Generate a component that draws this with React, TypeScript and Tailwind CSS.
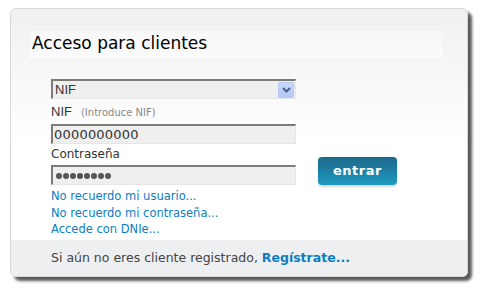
export default function App() {
  const font = { fontFamily: 'Tahoma, "DejaVu Sans", Verdana, sans-serif' };
  return (
    <div className="w-[481px] h-[289px] bg-white pt-[8px] pl-[10px]" style={font}>
      <div className="relative w-[458px] h-[269px] rounded-[6px] border border-[#d8d8d8] bg-gradient-to-b from-[#f0f0f0] via-white to-white shadow-[4px_4px_3px_rgba(0,0,0,0.65)] flex flex-col overflow-hidden">
        <div className="pt-[22px] pl-[19px] pr-[24px]">
          <div className="h-[27px] bg-gradient-to-b from-[#f6f6f6] to-[#fbfbfb] pl-[2px] pt-[1px]">
            <span className="text-[17px] leading-[20px] text-black bg-[#f9f9f9] pr-[2px]">Acceso para clientes</span>
          </div>
        </div>

        <div className="pl-[40px] pt-[21px] flex gap-[22px]">
          <div className="w-[245px] flex flex-col">
            <div className="h-[20px] flex items-center bg-[#efefef] border-t-2 border-l-2 border-[#7b7b74] border-r border-b border-r-[#e6e6e6] border-b-[#e6e6e6] pl-[2px] pr-[1px]">
              <span className="flex-1 text-[13px] text-[#333]" style={{ fontFamily: '"Liberation Sans", Arial, sans-serif' }}>NIF</span>
              <span className="w-[16px] h-[16px] rounded-[2px] bg-gradient-to-b from-[#c9d9fb] to-[#b4c8f6] border border-[#b8c8ee] flex items-center justify-center">
                <svg width="9" height="6" viewBox="0 0 9 6">
                  <path d="M1 1 L4.5 4.5 L8 1" stroke="#4d6185" strokeWidth="2" fill="none" />
                </svg>
              </span>
            </div>
            <div className="mt-[3px] h-[20px] flex items-baseline gap-[9px]">
              <span className="text-[13px] text-[#333]" style={{ fontFamily: '"Liberation Sans", Arial, sans-serif' }}>NIF</span>
              <span className="text-[10px] text-[#888]">(Introduce NIF)</span>
            </div>
            <div className="mt-[2px] h-[20px] flex items-center bg-[#efefef] border-t-2 border-l-2 border-[#7b7b74] border-r border-b border-r-[#e6e6e6] border-b-[#e6e6e6] pl-[1px]">
              <span className="text-[13px] text-[#333] tracking-[0.2px]">0000000000</span>
            </div>
            <div className="h-[20px] flex items-center">
              <span className="text-[12px] text-[#333]">Contraseña</span>
            </div>
            <div className="mt-[1px] h-[20px] flex items-center bg-[#efefef] border-t-2 border-l-2 border-[#7b7b74] border-r border-b border-r-[#e6e6e6] border-b-[#e6e6e6] pl-[3px] gap-[1px]">
              {Array.from({ length: 8 }).map((_, i) => (
                <span key={i} className="w-[6px] h-[6px] rounded-full bg-[#555]" />
              ))}
            </div>
            <div className="mt-[3px] flex flex-col text-[11.5px] leading-[16.5px] text-[#0b7ec2]">
              <span>No recuerdo mi usuario...</span>
              <span>No recuerdo mi contraseña...</span>
              <span>Accede con DNIe...</span>
            </div>
          </div>
          <div className="pt-[78px]">
            <div className="w-[79px] h-[28px] rounded-[4px] flex items-center justify-center text-white font-bold text-[13px] shadow-[0_2px_2px_rgba(0,0,0,0.15)] bg-[linear-gradient(to_bottom,#1b6a8e_0%,#1f7da1_50%,#1a84aa_52%,#2198bd_100%)] tracking-[0.5px]">
              entrar
            </div>
          </div>
        </div>

        <div className="mt-auto h-[36px] bg-[#eeeff0] pl-[40px] flex items-center text-[12.5px] text-[#444]">
          <span>Si aún no eres cliente registrado,&nbsp;</span>
          <span className="font-bold text-[#0b7ec2]">Regístrate...</span>
        </div>
      </div>
    </div>
  );
}
